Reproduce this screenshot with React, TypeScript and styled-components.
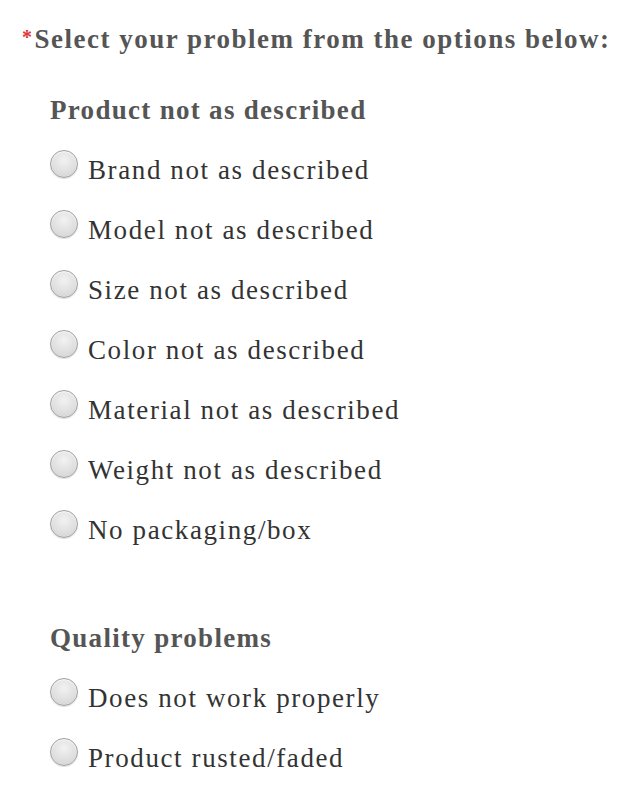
import * as React from 'react';
import styled, { createGlobalStyle } from 'styled-components';

const GlobalStyle = createGlobalStyle`
  html, body {
    margin: 0;
    padding: 0;
    background: #ffffff;
  }
  body {
    font-family: "Liberation Serif", "DejaVu Serif", serif;
  }
`;

const groups = [
  {
    title: 'Product not as described',
    options: [
      'Brand not as described',
      'Model not as described',
      'Size not as described',
      'Color not as described',
      'Material not as described',
      'Weight not as described',
      'No packaging/box',
    ],
  },
  {
    title: 'Quality problems',
    options: ['Does not work properly', 'Product rusted/faded'],
  },
];

export default function App() {
  return (
    <>
      <GlobalStyle />
      <Form>
        <Prompt>
          <Star>*</Star>Select your problem from the options below:
        </Prompt>
        {groups.map((group) => (
          <Group key={group.title}>
            <GroupTitle>{group.title}</GroupTitle>
            {group.options.map((opt) => (
              <Option key={opt}>
                <Radio type="radio" name="problem" />
                <span>{opt}</span>
              </Option>
            ))}
          </Group>
        ))}
      </Form>
    </>
  );
}

const Form = styled.div`
  display: flex;
  flex-direction: column;
  gap: 48px;
  padding: 10px 0 0 22px;
`;

const Prompt = styled.div`
  height: 60px;
  line-height: 54px;
  font-size: 27px;
  font-weight: 700;
  color: #555555;
  letter-spacing: 1.5px;
  white-space: nowrap;
  margin-bottom: -38px;
`;

const Star = styled.span`
  color: #e0333a;
  font-size: 20px;
  vertical-align: 4px;
  margin-right: 1px;
`;

const Group = styled.div`
  display: flex;
  flex-direction: column;
  padding-left: 28px;
`;

const GroupTitle = styled.div`
  height: 60px;
  line-height: 60px;
  font-size: 27px;
  font-weight: 700;
  color: #555555;
  letter-spacing: 1.3px;
`;

const Option = styled.label`
  display: flex;
  align-items: center;
  gap: 10px;
  height: 60px;
  font-size: 27px;
  color: #333333;
  letter-spacing: 1.6px;
`;

const Radio = styled.input`
  appearance: none;
  margin: 0;
  margin-top: -12px;
  width: 28px;
  height: 28px;
  flex: none;
  border-radius: 50%;
  border: 1px solid #a0a0a0;
  background: radial-gradient(circle at 50% 35%, #f2f2f2 0%, #dedede 60%, #cfcfcf 100%);
  box-shadow: inset 0 1px 2px rgba(255, 255, 255, 0.9), 0 1px 1px rgba(0, 0, 0, 0.12);
`;
